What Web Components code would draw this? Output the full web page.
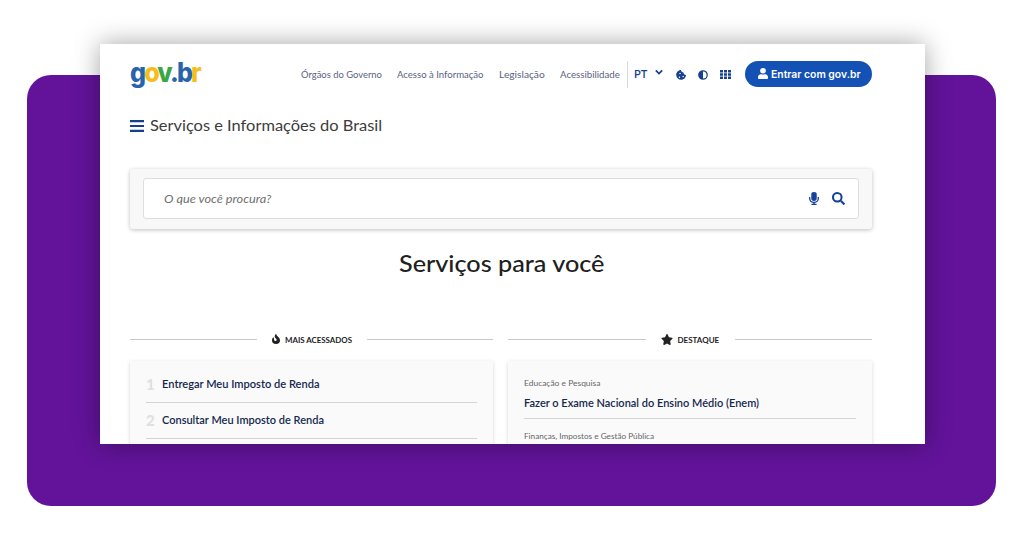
<!DOCTYPE html>
<html lang="pt-BR">
<head>
<meta charset="utf-8">
<title>gov.br</title>
<style>
    body {
        margin: 0;
        width: 1024px;
        height: 536px;
        overflow: hidden;
        background: #fff;
        font-family: Lato, "Open Sans", sans-serif;
    }
</style>
</head>
<body>
<page-stage>
    <site-header></site-header>
    <site-title label="Serviços e Informações do Brasil"></site-title>
    <search-box placeholder="O que você procura?"></search-box>
    <section-heading><fit-text width="205">Serviços para você</fit-text></section-heading>
    <service-columns>
        <service-column icon="fire" label="MAIS ACESSADOS" label-width="67">
            <ranked-item rank="1"><fit-text width="157">Entregar Meu Imposto de Renda</fit-text></ranked-item>
            <ranked-item rank="2"><fit-text width="162">Consultar Meu Imposto de Renda</fit-text></ranked-item>
        </service-column>
        <service-column icon="star" label="DESTAQUE" label-width="42">
            <featured-item>
                <fit-text slot="area" width="76">Educação e Pesquisa</fit-text>
                <fit-text width="235">Fazer o Exame Nacional do Ensino Médio (Enem)</fit-text>
            </featured-item>
            <featured-item>
                <fit-text slot="area" width="130">Finanças, Impostos e Gestão Pública</fit-text>
            </featured-item>
        </service-column>
    </service-columns>
</page-stage>

<script>
const ICONS = {
    chevron: ["0 0 10 8", `<path d="M1.8 2.4 5 5.5l3.2-3.1" fill="none" stroke="currentColor" stroke-width="1.7"/>`],
    cookie: ["0 0 512 512", `<path fill-rule="evenodd" d="M510 255c-70-1-126-57-127-127-70-1-126-57-127-127-25-3-50 1-73 12l-69 35c-24 12-43 31-55 55l-35 69c-12 24-16 51-12 77l12 77c4 26 17 51 36 69l55 55c18 19 43 32 69 36l77 12c26 4 53 0 77-12l69-35c24-12 43-31 55-55l35-69c12-22 16-47 13-72zM176 328a40 40 0 1 1 0 80 40 40 0 0 1 0-80zM208 136a40 40 0 1 1 0 80 40 40 0 0 1 0-80zM368 296a40 40 0 1 1 0 80 40 40 0 0 1 0-80z"/>`],
    contrast: ["0 0 512 512", `<path fill-rule="evenodd" d="M8 256a248 248 0 1 0 496 0A248 248 0 1 0 8 256zM256 440V72a184 184 0 0 1 0 368z"/>`],
    grid: ["0 0 11 9", `<path d="M0 0h3v2.4H0zM4 0h3v2.4H4zM8 0h3v2.4H8zM0 3.3h3v2.4H0zM4 3.3h3v2.4H4zM8 3.3h3v2.4H8zM0 6.6h3V9H0zM4 6.6h3V9H4zM8 6.6h3V9H8z"/>`],
    user: ["0 0 448 512", `<path d="M224 256a128 128 0 1 0 0-256 128 128 0 0 0 0 256zm90 32h-17a174 174 0 0 1-146 0h-17C60 288 0 348 0 422v42c0 27 21 48 48 48h352c27 0 48-21 48-48v-42c0-74-60-134-134-134z"/>`],
    bars: ["0 0 14 12", `<path d="M0 0h14v2.2H0zM0 4.9h14v2.2H0zM0 9.8h14V12H0z"/>`],
    mic: ["0 0 352 512", `<path d="M176 352a96 96 0 0 0 96-96V96a96 96 0 0 0-192 0v160a96 96 0 0 0 96 96zm160-160h-16a16 16 0 0 0-16 16v48a128 128 0 0 1-256 0v-48a16 16 0 0 0-16-16H16a16 16 0 0 0-16 16v46c0 84 60 161 152 175v35H96a16 16 0 0 0-16 16v16a16 16 0 0 0 16 16h160a16 16 0 0 0 16-16v-16a16 16 0 0 0-16-16h-56v-35c86-12 152-85 152-174v-47a16 16 0 0 0-16-16z"/>`],
    search: ["0 0 512 512", `<path d="M505 443 405 343c-4-5-10-7-17-7h-16a208 208 0 1 0-36 36v16c0 7 2 13 7 17l100 100c9 9 24 9 34 0l28-28c9-10 9-25 0-34zM208 336a128 128 0 1 1 0-256 128 128 0 0 1 0 256z"/>`],
    fire: ["0 0 384 512", `<path d="M216 24C216 0 186-9 172 11 48 192 224 200 224 288c0 36-29 64-65 64-35 0-63-29-63-65v-86c0-21-26-32-41-17C28 213 0 261 0 320a192 192 0 0 0 384 0c0-170-168-193-168-296z"/>`],
    star: ["0 0 576 512", `<path d="m259 18-65 132-146 21c-26 4-37 36-18 55l106 103-25 145c-5 26 23 46 46 34l131-69 131 69c23 12 51-8 46-34l-25-145 106-103c19-19 8-51-18-55l-146-21-65-132c-12-24-46-24-58 0z"/>`]
};

const icon = (name, width, height) =>
    `<svg viewBox="${ICONS[name][0]}" width="${width}" height="${height}" fill="currentColor" preserveAspectRatio="none" aria-hidden="true">${ICONS[name][1]}</svg>`;

class BaseElement extends HTMLElement {
    connectedCallback() {
        if (!this.shadowRoot) {
            this.attachShadow({mode: "open"}).innerHTML = this.render();
        }
    }
}

/* One line of text, stretched sideways so that it takes the given width in px. */
class FitText extends BaseElement {
    render() {
        return `
        <style>
            :host { display: inline-block; flex: none; width: ${this.getAttribute("width")}px; white-space: nowrap; text-align: left; }
            span { display: inline-block; transform-origin: 0 50%; vertical-align: top; }
        </style>
        <span><slot></slot></span>`;
    }

    connectedCallback() {
        super.connectedCallback();
        const span = this.shadowRoot.querySelector("span");
        const natural = span.offsetWidth;
        if (natural) span.style.transform = `scaleX(${Number(this.getAttribute("width")) / natural})`;
    }
}

class PageStage extends BaseElement {
    render() {
        return `
        <style>
            :host { display: flow-root; }
            .panel {
                display: flex;
                align-items: flex-start;
                box-sizing: border-box;
                width: 969px;
                height: 431px;
                margin: 75px 0 0 27px;
                padding-left: 73px;
                border-radius: 24px;
                background: #62139a;
            }
            .window {
                box-sizing: border-box;
                width: 825px;
                height: 400px;
                margin-top: -31px;
                padding: 17px 53px 0 30px;
                overflow: hidden;
                background: #fff;
                box-shadow: 0 0 24px rgba(0, 0, 0, .36);
            }
        </style>
        <div class="panel"><main class="window"><slot></slot></main></div>`;
    }
}

class GovLogo extends BaseElement {
    render() {
        return `
        <style>
            :host {
                display: block;
                width: 72px;
                margin-top: -4px;
                font: 800 26.5px/26px Inter, sans-serif;
                letter-spacing: -2px;
                color: #2864ae;
            }
            fit-text { display: block; }
            .y { color: #f9bd1b; }
            .g { color: #38a844; }
        </style>
        <fit-text width="70"><span>g</span><span class="y">o</span><span class="g">v</span><span>.b</span><span class="y">r</span></fit-text>`;
    }
}

class SiteHeader extends BaseElement {
    render() {
        return `
        <style>
            :host { display: flex; align-items: center; height: 26px; color: #14408f; }
            nav {
                display: flex;
                gap: 15px;
                margin-left: 99px;
                font-size: 10px;
                line-height: 14px;
                color: #596381;
            }
            .rule { width: 1px; height: 27px; margin: 0 6px 0 7px; background: #d8d8d8; }
            .lang { font-size: 11px; font-weight: 600; line-height: 14px; }
            svg { display: block; flex: none; }
            .tools { display: flex; align-items: center; gap: 12px; margin: 1px 0 0 12px; }
            .chev { margin: -4px 0 0 7px; }
            button {
                display: flex;
                align-items: center;
                gap: 3px;
                box-sizing: border-box;
                width: 127px;
                height: 26px;
                margin: 0 0 0 auto;
                padding: 0 0 0 13px;
                border: 0;
                border-radius: 13px;
                background: #1351b4;
                color: #fff;
                font: 600 10.5px/14px Inter, sans-serif;
            }
            button svg { margin-top: -2px; }
            button fit-text { margin-top: 1px; }
        </style>
        <gov-logo></gov-logo>
        <nav>
            <fit-text width="81">Órgãos do Governo</fit-text>
            <fit-text width="87">Acesso à Informação</fit-text>
            <fit-text width="46">Legislação</fit-text>
            <fit-text width="60">Acessibilidade</fit-text>
        </nav>
        <span class="rule"></span>
        <fit-text class="lang" width="13">PT</fit-text>
        <span class="chev">${icon("chevron", 10, 8)}</span>
        <span class="tools">${icon("cookie", 10, 10)}${icon("contrast", 10, 10)}${icon("grid", 11, 9)}</span>
        <button>${icon("user", 10, 11)}<fit-text width="90">Entrar com gov.br</fit-text></button>`;
    }
}

class SiteTitle extends BaseElement {
    render() {
        return `
        <style>
            :host { display: flex; align-items: center; gap: 6px; height: 20px; margin-top: 29px; color: #14408f; }
            svg { display: block; margin-top: -1px; }
            fit-text { margin-top: -2px; font-size: 15.5px; line-height: 20px; color: #3c3c3c; }
        </style>
        ${icon("bars", 14, 12)}
        <fit-text width="232">${this.getAttribute("label")}</fit-text>`;
    }
}

class SearchBox extends BaseElement {
    render() {
        return `
        <style>
            :host {
                display: block;
                box-sizing: border-box;
                height: 60px;
                margin-top: 33px;
                padding: 9px 13px 10px;
                border-radius: 3px;
                background: #f8f8f8;
                box-shadow: 0 1px 4px rgba(0, 0, 0, .25);
            }
            .field {
                display: flex;
                align-items: center;
                box-sizing: border-box;
                height: 41px;
                padding: 0 13px 0 20px;
                border: 1px solid #dedede;
                border-radius: 3px;
                background: #fff;
                color: #15429a;
            }
            fit-text { margin-right: auto; font-size: 12px; font-style: italic; color: #707070; }
            svg { display: block; }
            svg + svg { margin: 0 0 0 13px; }
        </style>
        <div class="field">
            <fit-text width="107">${this.getAttribute("placeholder")}</fit-text>
            ${icon("mic", 10, 13)}${icon("search", 13, 13)}
        </div>`;
    }
}

class SectionHeading extends BaseElement {
    render() {
        return `
        <style>
            :host {
                display: block;
                height: 30px;
                margin-top: 19px;
                font-size: 23px;
                font-weight: 500;
                line-height: 30px;
                text-align: center;
                color: #202020;
            }
        </style>
        <slot></slot>`;
    }
}

class ServiceColumns extends BaseElement {
    render() {
        return `
        <style>
            :host { display: grid; grid-template-columns: 363px 364px; gap: 15px; margin-top: 53px; }
        </style>
        <slot></slot>`;
    }
}

class ServiceColumn extends BaseElement {
    render() {
        const name = this.getAttribute("icon");
        return `
        <style>
            :host { display: block; }
            header { display: flex; align-items: center; height: 16px; color: #222; }
            header::before, header::after { content: ""; flex: 1; height: 1px; background: #c9c9c9; }
            .label { display: flex; align-items: center; gap: 5px; margin: 0 15px; }
            svg { display: block; }
            fit-text { font-size: 8px; font-weight: 700; line-height: 10px; margin-top: 1px; }
            .card {
                height: 100px;
                margin-top: 14px;
                padding: 5px 16px 0;
                background: #fafafa;
                box-shadow: 0 1px 4px rgba(0, 0, 0, .16);
            }
        </style>
        <header>
            <span class="label">
                ${name === "fire" ? icon("fire", 8, 10) : icon("star", 12, 11)}
                <fit-text width="${this.getAttribute("label-width")}">${this.getAttribute("label")}</fit-text>
            </span>
        </header>
        <div class="card"><slot></slot></div>`;
    }
}

class RankedItem extends BaseElement {
    render() {
        return `
        <style>
            :host {
                display: flex;
                align-items: center;
                box-sizing: border-box;
                height: 36px;
                padding-bottom: 1px;
                border-bottom: 1px solid #d4d4d4;
                font-size: 11px;
                font-weight: 600;
                line-height: 14px;
                color: #14284f;
            }
            :host(:first-child) { height: 37px; }
            b { width: 16px; font-size: 15px; color: #e0e0e0; }
        </style>
        <b>${this.getAttribute("rank")}</b><slot></slot>`;
    }
}

class FeaturedItem extends BaseElement {
    render() {
        return `
        <style>
            :host {
                display: flex;
                flex-direction: column;
                align-items: flex-start;
                gap: 8px;
                box-sizing: border-box;
                height: 53px;
                padding-top: 12px;
                border-bottom: 1px solid #d4d4d4;
                font-size: 11px;
                font-weight: 600;
                line-height: 14px;
                color: #14284f;
            }
            ::slotted([slot="area"]) { font-size: 8px; font-weight: 400; line-height: 10px; color: #666; }
        </style>
        <slot name="area"></slot><slot></slot>`;
    }
}

customElements.define("page-stage", PageStage);
customElements.define("gov-logo", GovLogo);
customElements.define("site-header", SiteHeader);
customElements.define("site-title", SiteTitle);
customElements.define("search-box", SearchBox);
customElements.define("section-heading", SectionHeading);
customElements.define("service-columns", ServiceColumns);
customElements.define("service-column", ServiceColumn);
customElements.define("ranked-item", RankedItem);
customElements.define("featured-item", FeaturedItem);
/* Last, so that the fonts of the hosts above are in force when it measures. */
customElements.define("fit-text", FitText);
</script>
</body>
</html>
